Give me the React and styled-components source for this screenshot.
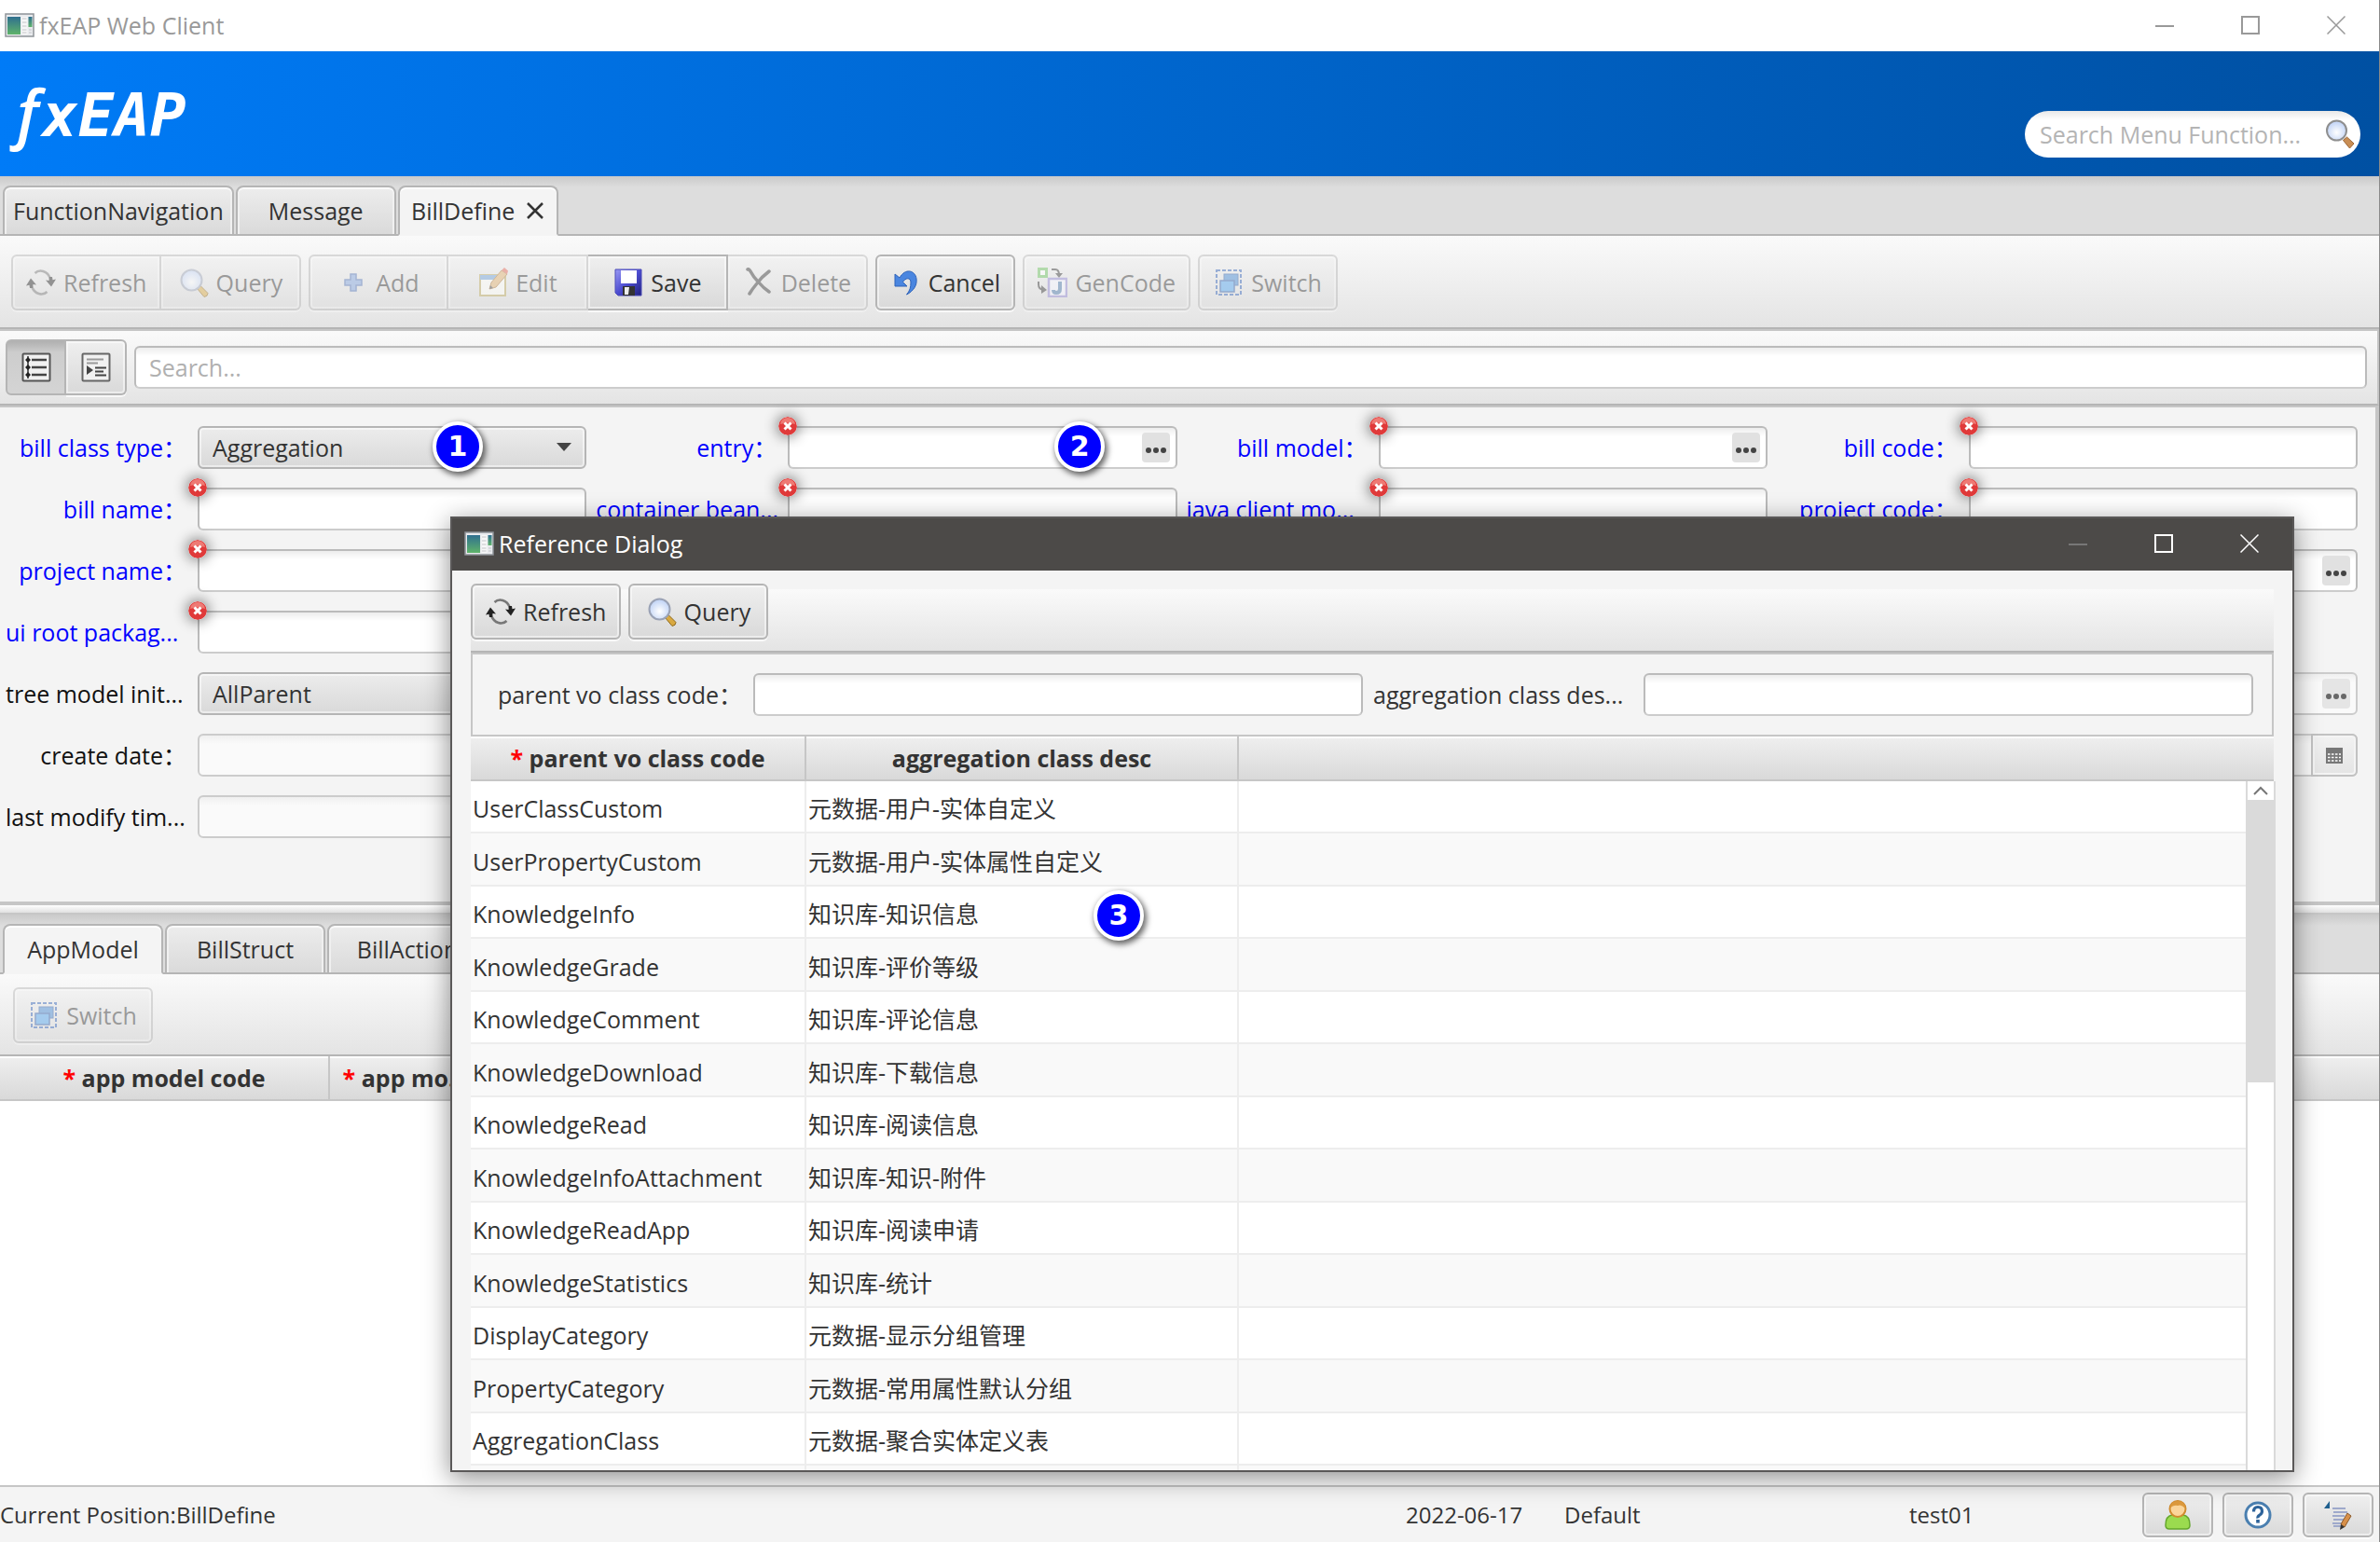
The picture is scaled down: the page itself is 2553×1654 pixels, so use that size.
import React, { useState } from 'react'
import styled, { createGlobalStyle, css } from 'styled-components'

const GlobalStyle = createGlobalStyle`
  * {
    box-sizing: border-box;
  }
  body {
    margin: 0;
    background: #f4f4f4;
  }
  body, button, input, select {
    font-family: "Open Sans", "Noto Sans CJK SC", sans-serif;
    font-size: 25px;
    line-height: 32px;
    color: #333;
  }
`

/* ---------- data ---------- */

const FIELDS = [
  { id: 'billClassType', label: 'bill class type', kind: 'select', value: 'Aggregation', required: true, badge: '1' },
  { id: 'entry', label: 'entry', kind: 'ref', required: true, error: true, badge: '2' },
  { id: 'billModel', label: 'bill model', kind: 'ref', required: true, error: true },
  { id: 'billCode', label: 'bill code', required: true, error: true },

  { id: 'billName', label: 'bill name', required: true, error: true },
  { id: 'containerBean', label: 'container bean...', cut: true, required: true, error: true },
  { id: 'javaClient', label: 'java client mo...', cut: true, required: true, error: true },
  { id: 'projectCode', label: 'project code', required: true, error: true },

  { id: 'projectName', label: 'project name', required: true, error: true },
  null,
  null,
  { id: 'projectRef', kind: 'ref' },

  { id: 'uiRoot', label: 'ui root packag...', cut: true, required: true, error: true },
  null,
  null,
  null,

  { id: 'treeModel', label: 'tree model init...', cut: true, kind: 'select', value: 'AllParent' },
  null,
  null,
  { id: 'creator', kind: 'ref', disabled: true },

  { id: 'createDate', label: 'create date', disabled: true },
  null,
  null,
  { id: 'modifyDate', kind: 'date', disabled: true },

  { id: 'lastModify', label: 'last modify tim...', cut: true, disabled: true },
]

const ROWS = [
  ['UserClassCustom', '元数据-用户-实体自定义'],
  ['UserPropertyCustom', '元数据-用户-实体属性自定义'],
  ['KnowledgeInfo', '知识库-知识信息'],
  ['KnowledgeGrade', '知识库-评价等级'],
  ['KnowledgeComment', '知识库-评论信息'],
  ['KnowledgeDownload', '知识库-下载信息'],
  ['KnowledgeRead', '知识库-阅读信息'],
  ['KnowledgeInfoAttachment', '知识库-知识-附件'],
  ['KnowledgeReadApp', '知识库-阅读申请'],
  ['KnowledgeStatistics', '知识库-统计'],
  ['DisplayCategory', '元数据-显示分组管理'],
  ['PropertyCategory', '元数据-常用属性默认分组'],
  ['AggregationClass', '元数据-聚合实体定义表'],
  ['', ''],
]

/* ---------- icons ---------- */

const Icon = styled.svg.attrs({ viewBox: '0 0 32 32', 'aria-hidden': true })`
  width: 32px;
  height: 32px;
  flex: none;
  display: block;
`

const AppIcon = () => (
  <Icon>
    <defs>
      <linearGradient id="appGreen" x1="0" y1="0" x2="0" y2="1">
        <stop offset="0" stopColor="#2f6f8f" />
        <stop offset="1" stopColor="#5fb36a" />
      </linearGradient>
    </defs>
    <rect x="1" y="4" width="30" height="24" fill="#e9ebee" stroke="#8f9499" strokeWidth="1.5" />
    <rect x="3" y="7" width="14" height="19" fill="url(#appGreen)" />
    <rect x="18.5" y="7" width="6" height="19" fill="#f7f7f7" />
    <path d="M19 9h4.5M19 13h4.5M19 17h4.5M19 21h4.5M19 24h4.5" stroke="#c3c6c9" strokeWidth="1.2" />
    <rect x="25.5" y="7" width="4" height="11" fill="url(#appGreen)" />
    <path d="M26 21h3M26 24h3" stroke="#c3c6c9" />
  </Icon>
)

const RefreshIcon = () => (
  <Icon>
    <path d="M9.5 6C14 1.5 23 3 26 12M22.5 26C18 30.5 9 29 6 20" fill="none" stroke="#777" strokeWidth="2.5" />
    <path d="M0 19.5 5 11.5 11 18.5 7.5 18 7 22 4 22 3.5 18.8z" fill="#222" />
    <path d="M32 12.5 27 20.5 21 13.5 24.5 14 25 10 28 10 28.5 13.2z" fill="#222" />
  </Icon>
)

const QueryIcon = () => (
  <Icon>
    <defs>
      <radialGradient id="lens" cx="0.5" cy="0.6" r="0.6">
        <stop offset="0" stopColor="#fff" />
        <stop offset="1" stopColor="#bcd0f5" />
      </radialGradient>
    </defs>
    <path d="M19.5 22.5 23 19.5 31 27.5Q31 31 27 31.5z" fill="#d9a941" stroke="#8f6a1d" />
    <circle cx="13.5" cy="13.5" r="11" fill="url(#lens)" stroke="#9aa2b5" strokeWidth="2" />
  </Icon>
)

const MenuSearchIcon = () => (
  <Icon>
    <path d="M19.5 22.5 23.5 19 31 26 26.5 31z" fill="#c98e55" stroke="#9c6433" />
    <circle cx="12.5" cy="12" r="10.5" fill="url(#lens)" stroke="#8f8f8f" strokeWidth="2" />
  </Icon>
)

const AddIcon = () => (
  <Icon>
    <path d="M13 7h6v6h6v6h-6v6h-6v-6H7v-6h6z" fill="#7ea1dc" stroke="#4c6fb3" strokeWidth="1.5" />
  </Icon>
)

const EditIcon = () => (
  <Icon>
    <rect x="2" y="8" width="27" height="22" fill="#fdfdf6" stroke="#b9a65a" strokeWidth="2" />
    <rect x="2" y="8" width="20" height="5" fill="#6d9fd6" />
    <path d="M12 23 14 16 25 3 31 7 19 21z" fill="#dfae6b" stroke="#a87434" />
    <path d="M25 3 28 0 32 3.5 31 7z" fill="#e0614f" />
    <path d="M12 23 13 19 16 22z" fill="#444" />
  </Icon>
)

const SaveIcon = () => (
  <Icon>
    <defs>
      <linearGradient id="disk" x1="0" y1="0" x2="1" y2="1">
        <stop offset="0" stopColor="#9a9af4" />
        <stop offset="0.5" stopColor="#4c4cd0" />
        <stop offset="1" stopColor="#20207c" />
      </linearGradient>
    </defs>
    <path d="M2 2h28v28H5l-3-3z" fill="url(#disk)" stroke="#4a4ab8" />
    <rect x="8" y="3" width="17" height="14" fill="#fff" />
    <rect x="10" y="20" width="13" height="10" fill="#333" />
    <path d="M12 21h5l-1 8h-4z" fill="#eee" />
  </Icon>
)

const DeleteIcon = () => (
  <Icon>
    <path d="M4 2Q5 1 7 4Q10 10 16 16Q21 22 27 26M27 4Q19 10 14 17Q9 23 6 28" fill="none" stroke="#333" strokeWidth="3.5" strokeLinecap="round" />
  </Icon>
)

const CancelIcon = () => (
  <Icon>
    <path d="M4 7v13h13l-4.5-4.5C15 11 21 10 21 16c0 5-1 9-4.5 13C24 25 28 19 27 12 26 3 15 0 9 11z" fill="#4a86e0" stroke="#2e62b8" />
  </Icon>
)

const GenCodeIcon = () => (
  <Icon>
    <rect x="1.5" y="1.5" width="8" height="8" fill="#fff" stroke="#67bf59" strokeWidth="3" />
    <path d="M15 2h4q4 0 4 6M1 15v3q0 5 5 6" fill="none" stroke="#333" strokeWidth="2" />
    <path d="M19 6h8l-4 5zM4 19l6 5-6 4z" fill="#333" />
    <rect x="12" y="12" width="19" height="19" fill="#f4f4ff" stroke="#8e84cf" strokeWidth="2.5" />
    <path d="M24 15v8q0 4-4 4-3 0-3-3" fill="none" stroke="#4574a8" strokeWidth="4" />
  </Icon>
)

const SwitchIcon = () => (
  <Icon>
    <rect x="3" y="3" width="26" height="26" fill="none" stroke="#2f5fb5" strokeWidth="2" strokeDasharray="4 2" />
    <rect x="11" y="7" width="15" height="12" fill="#3f86d2" stroke="#2a58a5" />
    <rect x="7" y="14" width="15" height="12" fill="#4da2ee" stroke="#2a58a5" strokeWidth="1.5" />
  </Icon>
)

const ListIcon = () => (
  <Icon>
    <rect x="1.5" y="1.5" width="29" height="29" rx="1" fill="#f1f1f1" stroke="#555" strokeWidth="2" />
    <path d="M7 4v24" stroke="#333" strokeWidth="1.5" />
    <path d="M11 8h16M11 16h16M11 24h16" stroke="#444" strokeWidth="2.5" />
    <path d="M7 5l3 3-3 3-3-3zM7 13l3 3-3 3-3-3zM7 21l3 3-3 3-3-3z" fill="#222" />
  </Icon>
)

const IndentIcon = () => (
  <Icon>
    <rect x="1.5" y="1.5" width="29" height="29" rx="1" fill="#f1f1f1" stroke="#666" strokeWidth="2" />
    <path d="M6 7.5h18M6 11.5h12" stroke="#999" strokeWidth="2" />
    <path d="M15 16.5h12M15 20.5h9M15 24.5h12" stroke="#444" strokeWidth="2.2" />
    <path d="M6 14l7 5-7 5z" fill="#444" />
  </Icon>
)

const UserIcon = () => (
  <Icon>
    <path d="M3 27Q3 17 10 16h12q7 1 7 11 0 4-4 4H7q-4 0-4-4z" fill="#9bdb4f" stroke="#63a62b" strokeWidth="1.5" />
    <circle cx="16" cy="9.5" r="8.5" fill="#fbd59a" stroke="#d08b2e" strokeWidth="2" />
    <path d="M8 9Q8 1 16 1t8 8Q20 4 16 6 11 5 8 9z" fill="#dd9a3d" />
  </Icon>
)

const HelpIcon = () => (
  <Icon>
    <circle cx="16" cy="16" r="13" fill="#fff" stroke="#4a7fb0" strokeWidth="3" />
    <path d="M11.5 12.5q0-5 4.5-5t4.5 4.5q0 2.5-2.5 4t-2 3.5" fill="none" stroke="#2d639a" strokeWidth="3.2" />
    <rect x="14.2" y="21" width="3.6" height="3.6" fill="#2d639a" />
  </Icon>
)

const NoteIcon = () => (
  <Icon>
    <path d="M1 9 7 1v8z" fill="#1e5f8e" />
    <path d="M10 9h14M11 13h15M10 17h13M11 21h11M10 25h10M11 28h8" stroke="#9fa9cb" strokeWidth="2.2" />
    <path d="M19 26 26 14l4 3-7 12z" fill="#d8904a" stroke="#8b5a2a" />
    <path d="M19 26l4 3-5 3z" fill="#333" />
  </Icon>
)

const Glyph = styled.svg.attrs({ viewBox: '0 0 20 20', 'aria-hidden': true })`
  width: 20px;
  height: 20px;
  display: block;
  fill: none;
  stroke: currentColor;
  stroke-width: ${(p) => p.$weight || 2};
`

const ErrorIcon = styled.svg.attrs({ viewBox: '0 0 20 20', 'aria-hidden': true })`
  position: absolute;
  left: -10px;
  top: -10px;
  width: 20px;
  height: 20px;
  border-radius: 50%;
  box-shadow: 0 0 14px 2px rgba(0, 0, 0, 0.45);
`

/* ---------- window frame ---------- */

const App = styled.div`
  position: relative;
  display: flex;
  flex-direction: column;
  min-height: 100vh;
  overflow: hidden;
  background: #f4f4f4;
  border-right: 1px solid #8a8a8a;
`

const TitleBar = styled.div`
  display: flex;
  align-items: center;
  gap: 5px;
  height: ${(p) => (p.$dark ? 56 : 55)}px;
  flex: none;
  padding: 0 0 2px ${(p) => (p.$dark ? 13 : 5)}px;
  background: ${(p) => (p.$dark ? '#4c4a48' : '#fff')};
  color: ${(p) => (p.$dark ? '#fff' : '#999')};
`

const WindowButtons = styled.div`
  display: flex;
  height: 100%;
  margin-left: auto;
`

const WindowButton = styled.button`
  display: flex;
  align-items: center;
  justify-content: center;
  width: 92px;
  padding: 0;
  border: 0;
  background: none;
  color: inherit;

  &:disabled {
    color: #777;
  }
`

const Banner = styled.header`
  display: flex;
  justify-content: space-between;
  align-items: flex-end;
  height: 134px;
  padding: 0 20px 20px 18px;
  background: linear-gradient(90deg, #007bf7, #0050a2);
`

const Logo = styled.h1`
  display: flex;
  align-items: baseline;
  gap: 4px;
  margin: 0;
  font: italic bold 64px/90px "DejaVu Sans Mono", monospace;
  color: #fff;
`

/* the descending f only exists in the humanist italic */
const LogoInitial = styled.span`
  font: italic 600 68px/90px "Open Sans", sans-serif;
`

const MenuSearch = styled.label`
  display: flex;
  align-items: center;
  width: 360px;
  height: 50px;
  padding: 0 6px 0 16px;
  border-radius: 25px;
  background: linear-gradient(#e8e8e8, #fff 10px);

  input {
    flex: 1;
    min-width: 0;
    padding: 0;
    border: 0;
    outline: 0;
    background: none;
  }
  input::placeholder {
    color: #b4b4b4;
    opacity: 1;
  }
`

/* ---------- tabs ---------- */

const TabStrip = styled.div`
  display: flex;
  gap: 2px;
  height: 64px;
  flex: none;
  padding: 10px 0 0 3px;
  border-bottom: 2px solid #b5b5b5;
  background: linear-gradient(#cacaca, #ddd 12px);
`

const Tab = styled.button`
  display: flex;
  align-items: center;
  justify-content: center;
  gap: 12px;
  min-width: 172px;
  height: 54px;
  padding: 0 9px;
  border: 2px solid #b5b5b5;
  border-radius: 8px 8px 0 0;
  background: linear-gradient(#ededed, #dadada);
  box-shadow: inset 0 2px #fafafa, inset 2px 0 #f0f0f0, inset -2px 0 #f0f0f0;
  ${(p) =>
    p.$active &&
    css`
      background: #f4f4f4;
      border-bottom-color: #f4f4f4;
      box-shadow: inset 0 2px #fff;
    `}
`

/* ---------- toolbars ---------- */

const Toolbar = styled.div`
  display: flex;
  align-items: flex-start;
  gap: 8px;
  flex: none;
  padding: 20px 12px 18px;
  border-bottom: 2px solid #b5b5b5;
  box-shadow: 0 2px #c6c6c6;
  background: linear-gradient(#fafafa, #e4e4e4);
  ${(p) =>
    p.$compact &&
    css`
      padding: 14px 14px 12px;
      box-shadow: none;
    `}
`

const DialogToolbar = styled(Toolbar)`
  padding: 0 0 12px;
  background: linear-gradient(#f4f4f4 6px, #fafafa 6px, #e4e4e4);
`

const ButtonGroup = styled.div`
  display: flex;

  > button:not(:first-child) {
    border-left: 0;
    border-top-left-radius: 0;
    border-bottom-left-radius: 0;
  }
  > button:not(:last-child) {
    border-top-right-radius: 0;
    border-bottom-right-radius: 0;
  }
`

const Button = styled.button`
  display: flex;
  align-items: center;
  justify-content: center;
  gap: 8px;
  min-width: 150px;
  height: 60px;
  padding: 0 14px;
  border: 2px solid #b5b5b5;
  border-radius: 6px;
  background: linear-gradient(#efefef, #d9d9d9);
  box-shadow: inset 0 0 0 2px rgba(255, 255, 255, 0.5), 0 2px rgba(255, 255, 255, 0.7);

  &:disabled {
    color: #333;
    opacity: 0.45;
  }
`

const ToggleButton = styled(Button)`
  min-width: 65px;
  padding: 0;

  &[aria-pressed='true'] {
    background: linear-gradient(#b0b0b0, #cdcdcd 12px, #d4d4d4);
    box-shadow: none;
  }
`

const FilterBar = styled.div`
  display: flex;
  align-items: center;
  gap: 8px;
  height: 80px;
  flex: none;
  margin-top: 2px;
  padding: 0 11px 0 6px;
  border-bottom: 2px solid #b5b5b5;
  border-right: 2px solid #c6c6c6;
  background: linear-gradient(#fafafa, #e4e4e4);
`

const inputLook = css`
  width: 100%;
  min-width: 0;
  height: 46px;
  padding: 0 14px;
  border: 2px solid #bbb;
  border-bottom-color: #ccc;
  border-radius: 6px;
  outline: 0;
  background: linear-gradient(#ededed, #fff 9px);

  &::placeholder {
    color: #b0b0b0;
    opacity: 1;
  }
  &:disabled {
    border-color: #ccc;
    background: linear-gradient(#f0f0f0, #fafafa 9px);
  }
`

const TextInput = styled.input`
  display: block;
  ${inputLook}
`

/* ---------- bill form ---------- */

const Form = styled.form`
  display: grid;
  grid-template-columns: repeat(4, minmax(0, 1fr));
  grid-auto-rows: 46px;
  gap: 20px 10px;
  height: 536px;
  flex: none;
  padding: 20px 19px 0 6px;
  border: 2px solid #c6c6c6;
  border-width: 2px 4px 4px 0;
`

const Cell = styled.div`
  display: grid;
  grid-template-columns: 200px minmax(0, 1fr);
  column-gap: 6px;
  align-items: center;
`

const Label = styled.label`
  padding-right: ${(p) => (p.$cut ? 0 : 6)}px;
  white-space: nowrap;
  text-align: ${(p) => (p.$cut ? 'left' : 'right')};
  color: ${(p) => (p.$required ? '#0000ff' : '#111')};
`

const Control = styled.div`
  position: relative;
  grid-column: 2;
`

const Select = styled.select`
  width: 100%;
  height: 46px;
  display: block;
  appearance: none;
  padding: 0 14px;
  border: 2px solid #b5b5b5;
  border-radius: 6px;
  background: linear-gradient(#ececec, #d9d9d9);
  box-shadow: inset 0 0 0 2px rgba(255, 255, 255, 0.5);
`

const Arrow = styled.svg.attrs({ viewBox: '0 0 16 9', 'aria-hidden': true })`
  position: absolute;
  right: 16px;
  top: 18px;
  width: 16px;
  height: 9px;
  fill: #444;
  pointer-events: none;
`

const RefButton = styled.button`
  position: absolute;
  right: 8px;
  top: 7px;
  width: 30px;
  height: 32px;
  padding: 0;
  border: 0;
  border-radius: 4px;
  background: #e1e1e1;

  svg {
    display: block;
    width: 30px;
    height: 32px;
    fill: #444;
  }
  &:disabled {
    opacity: 0.8;
  }
`

const DateButton = styled.button`
  position: absolute;
  right: 0;
  top: 0;
  display: flex;
  align-items: center;
  justify-content: center;
  width: 50px;
  height: 46px;
  padding: 0;
  border: 2px solid #c2c2c2;
  border-radius: 0 6px 6px 0;
  background: linear-gradient(#f2f2f2, #e4e4e4);
  box-shadow: inset 0 0 0 2px #f4f4f4;
`

const StepBadge = styled.span`
  position: absolute;
  left: ${(p) => p.$left}px;
  top: ${(p) => p.$top || -5}px;
  display: flex;
  align-items: center;
  justify-content: center;
  width: 54px;
  height: 54px;
  border: 4px solid #fff;
  border-radius: 50%;
  background: #0000ff;
  box-shadow: 2px 3px 6px 1px rgba(0, 0, 0, 0.6);
  color: #fff;
  font: bold 30px/40px "DejaVu Sans", sans-serif;
`

/* ---------- tables ---------- */

const Splitter = styled.div`
  height: 10px;
  flex: none;
  border-bottom: 2px solid #c6c6c6;
  background: linear-gradient(#fff, #e0e0e0);
`

const GridArea = styled.div`
  position: relative;
  flex: 1;
  min-height: 0;
  background: #fff;
`

const Table = styled.table`
  width: 100%;
  border-collapse: separate;
  border-spacing: 0;
  table-layout: fixed;
`

const HeadCell = styled.th`
  width: ${(p) => (p.$width ? `${p.$width}px` : 'auto')};
  height: 48px;
  padding: 0;
  border-bottom: 2px solid #c6c6c6;
  border-right: ${(p) => (p.$width ? '2px solid #c6c6c6' : '0')};
  background: linear-gradient(#efefef, #d9d9d9);
  box-shadow: inset 0 2px rgba(255, 255, 255, 0.8);
  white-space: nowrap;
  font-weight: bold;
`

const Star = styled.span`
  color: #f00;
`

const Row = styled.tr`
  height: 56px;
  background: #fff;

  &:nth-child(even) {
    height: 57px;
    background: #f9f9f9;
  }
`

const DataCell = styled.td`
  position: relative;
  padding: 4px 2px 0;
  border-bottom: 2px solid #ededed;
  border-right: 2px solid #ededed;
  white-space: nowrap;

  &:last-child {
    border-right: 0;
  }
`

const ScrollTrack = styled.div`
  position: absolute;
  right: -2px;
  top: 48px;
  bottom: 0;
  display: flex;
  flex-direction: column;
  width: 32px;
  border: 2px solid #dadada;
  border-width: 0 2px;
  background: #fff;
`

const ScrollUp = styled.button`
  height: 20px;
  padding: 0 6px;
  border: 0;
  background: #fff;

  svg {
    display: block;
    width: 16px;
    height: 10px;
    fill: none;
    stroke: #777;
    stroke-width: 2;
  }
`

const ScrollThumb = styled.div`
  height: 41%;
  background: #dadada;
`

/* ---------- dialog ---------- */

const Dialog = styled.section`
  position: absolute;
  inset: 554px 91px 75px 483px;
  display: flex;
  flex-direction: column;
  border: 2px solid #5a5858;
  background: #f4f4f4;
  box-shadow: 0 6px 26px rgba(0, 0, 0, 0.45);
  z-index: 1;
`

const DialogBody = styled.div`
  display: flex;
  flex-direction: column;
  flex: 1;
  min-height: 0;
  overflow: hidden;
  padding: 14px 20px 0;
`

const QueryPanel = styled.form`
  display: grid;
  grid-template-columns: repeat(2, minmax(0, 1fr));
  gap: 11px;
  flex: none;
  margin-top: 2px;
  padding: 20px 20px 20px 11px;
  border: 2px solid #c6c6c6;
  border-top: 0;
`

const QueryCell = styled(Cell)`
  grid-template-columns: 284px minmax(0, 1fr);
`

const QueryLabel = styled(Label)`
  color: #333;
`

/* ---------- status bar ---------- */

const StatusBar = styled.footer`
  display: grid;
  grid-template-columns: 1fr 170px 370px 250px auto;
  align-items: center;
  height: 61px;
  flex: none;
  padding-right: 6px;
  border-top: 2px solid #c6c6c6;
  background: #f4f4f4;
  font-size: 24px;
`

const StatusButtons = styled.div`
  display: flex;
  gap: 10px;
`

const StatusButton = styled(Button)`
  min-width: 76px;
  height: 48px;
  padding: 0;
`

const WindowControls = ({ noMinimize }) => (
  <WindowButtons>
    <WindowButton aria-label="Minimize" disabled={noMinimize}>
      <Glyph><path d="M0 11h20" /></Glyph>
    </WindowButton>
    <WindowButton aria-label="Maximize">
      <Glyph><rect x="1" y="1" width="18" height="18" /></Glyph>
    </WindowButton>
    <WindowButton aria-label="Close">
      <Glyph $weight={1.5}><path d="M0.5 0.5l19 19M19.5 0.5l-19 19" /></Glyph>
    </WindowButton>
  </WindowButtons>
)

const Field = ({ field }) => {
  const { id, label, kind, value, required, error, disabled, cut, badge } = field

  return (
    <Cell>
      {label && (
        <Label htmlFor={id} $required={required} $cut={cut}>
          {cut ? label : `${label}：`}
        </Label>
      )}
      <Control>
        {kind === 'select' ? (
          <>
            <Select id={id} defaultValue={value}>
              <option>{value}</option>
            </Select>
            <Arrow><path d="M0 0h16L8 9z" /></Arrow>
          </>
        ) : (
          <TextInput id={id} aria-label={label ? undefined : id} disabled={disabled} />
        )}
        {kind === 'ref' && (
          <RefButton type="button" aria-label="Choose" disabled={disabled}>
            <svg viewBox="0 0 30 32">
              <circle cx="7" cy="19" r="3" />
              <circle cx="15" cy="19" r="3" />
              <circle cx="23" cy="19" r="3" />
            </svg>
          </RefButton>
        )}
        {kind === 'date' && (
          <DateButton type="button" aria-label="Pick date">
            <Glyph>
              <path d="M1 2h18v17H1z" fill="#777" stroke="none" />
              <path d="M3 9h14M3 12.5h14M3 16h14" stroke="#fff" strokeDasharray="2.5 1.5" strokeWidth="1.5" />
            </Glyph>
          </DateButton>
        )}
        {error && (
          <ErrorIcon>
            <circle cx="10" cy="10" r="10" fill="#e03a3a" />
            <path d="M2 8a8 7 0 0 1 16 0Q10 5 2 8z" fill="#ee7a74" />
            <path d="M6.5 6.5l7 7M13.5 6.5l-7 7" stroke="#fff" strokeWidth="3" />
          </ErrorIcon>
        )}
        {badge && <StepBadge $left={badge === '1' ? 252 : 286}>{badge}</StepBadge>}
      </Control>
    </Cell>
  )
}

const ReferenceDialog = () => (
  <Dialog role="dialog" aria-label="Reference Dialog">
    <TitleBar $dark>
      <AppIcon />
      <span>Reference Dialog</span>
      <WindowControls noMinimize />
    </TitleBar>
    <DialogBody>
      <DialogToolbar>
        <Button><RefreshIcon />Refresh</Button>
        <Button><QueryIcon />Query</Button>
      </DialogToolbar>
      <QueryPanel>
        <QueryCell>
          <QueryLabel htmlFor="parentVo">parent vo class code：</QueryLabel>
          <TextInput id="parentVo" />
        </QueryCell>
        <QueryCell>
          <QueryLabel htmlFor="aggDesc" $cut>aggregation class des...</QueryLabel>
          <TextInput id="aggDesc" />
        </QueryCell>
      </QueryPanel>
      <GridArea>
        <Table>
          <thead>
            <tr>
              <HeadCell $width={360}><Star>*</Star> parent vo class code</HeadCell>
              <HeadCell $width={464}>aggregation class desc</HeadCell>
              <HeadCell />
            </tr>
          </thead>
          <tbody>
            {ROWS.map(([code, desc], index) => (
              <Row key={index}>
                <DataCell>{code}</DataCell>
                <DataCell>
                  {desc}
                  {code === 'KnowledgeInfo' && <StepBadge $left={308} $top={4}>3</StepBadge>}
                </DataCell>
                <DataCell />
              </Row>
            ))}
          </tbody>
        </Table>
        <ScrollTrack>
          <ScrollUp aria-label="Scroll up">
            <svg viewBox="0 0 16 10"><path d="M1 9l7-7 7 7" /></svg>
          </ScrollUp>
          <ScrollThumb />
        </ScrollTrack>
      </GridArea>
    </DialogBody>
  </Dialog>
)

const BillDefine = () => {
  const [view, setView] = useState('list')

  return (
    <App>
      <GlobalStyle />
      <TitleBar>
        <AppIcon />
        <span>fxEAP Web Client</span>
        <WindowControls />
      </TitleBar>
      <Banner>
        <Logo><LogoInitial>f</LogoInitial>xEAP</Logo>
        <MenuSearch>
          <input aria-label="Search menu" placeholder="Search Menu Function..." />
          <MenuSearchIcon />
        </MenuSearch>
      </Banner>

      <TabStrip>
        <Tab>FunctionNavigation</Tab>
        <Tab>Message</Tab>
        <Tab $active>
          BillDefine
          <Glyph $weight={2.5}><path d="M2 2l16 16M18 2l-16 16" /></Glyph>
        </Tab>
      </TabStrip>

      <Toolbar>
        <ButtonGroup>
          <Button disabled><RefreshIcon />Refresh</Button>
          <Button disabled><QueryIcon />Query</Button>
        </ButtonGroup>
        <ButtonGroup>
          <Button disabled><AddIcon />Add</Button>
          <Button disabled><EditIcon />Edit</Button>
          <Button><SaveIcon />Save</Button>
          <Button disabled><DeleteIcon />Delete</Button>
        </ButtonGroup>
        <Button><CancelIcon />Cancel</Button>
        <Button disabled><GenCodeIcon />GenCode</Button>
        <Button disabled><SwitchIcon />Switch</Button>
      </Toolbar>

      <FilterBar>
        <ButtonGroup>
          <ToggleButton aria-label="List view" aria-pressed={view === 'list'} onClick={() => setView('list')}>
            <ListIcon />
          </ToggleButton>
          <ToggleButton aria-label="Detail view" aria-pressed={view === 'detail'} onClick={() => setView('detail')}>
            <IndentIcon />
          </ToggleButton>
        </ButtonGroup>
        <TextInput aria-label="Search" placeholder="Search..." />
      </FilterBar>

      <Form>
        {FIELDS.map((field, index) => (field ? <Field key={field.id} field={field} /> : <Cell key={index} />))}
      </Form>
      <Splitter />

      <TabStrip>
        <Tab $active>AppModel</Tab>
        <Tab>BillStruct</Tab>
        <Tab>BillAction</Tab>
      </TabStrip>
      <Toolbar $compact>
        <Button disabled><SwitchIcon />Switch</Button>
      </Toolbar>
      <GridArea>
        <Table>
          <thead>
            <tr>
              <HeadCell $width={354}><Star>*</Star> app model code</HeadCell>
              <HeadCell $width={164}><Star>*</Star> app mo...</HeadCell>
              <HeadCell />
            </tr>
          </thead>
        </Table>
      </GridArea>

      <StatusBar>
        <span>Current Position:BillDefine</span>
        <span>2022-06-17</span>
        <span>Default</span>
        <span>test01</span>
        <StatusButtons>
          <StatusButton aria-label="User"><UserIcon /></StatusButton>
          <StatusButton aria-label="Help"><HelpIcon /></StatusButton>
          <StatusButton aria-label="Notes"><NoteIcon /></StatusButton>
        </StatusButtons>
      </StatusBar>

      <ReferenceDialog />
    </App>
  )
}

export default BillDefine
